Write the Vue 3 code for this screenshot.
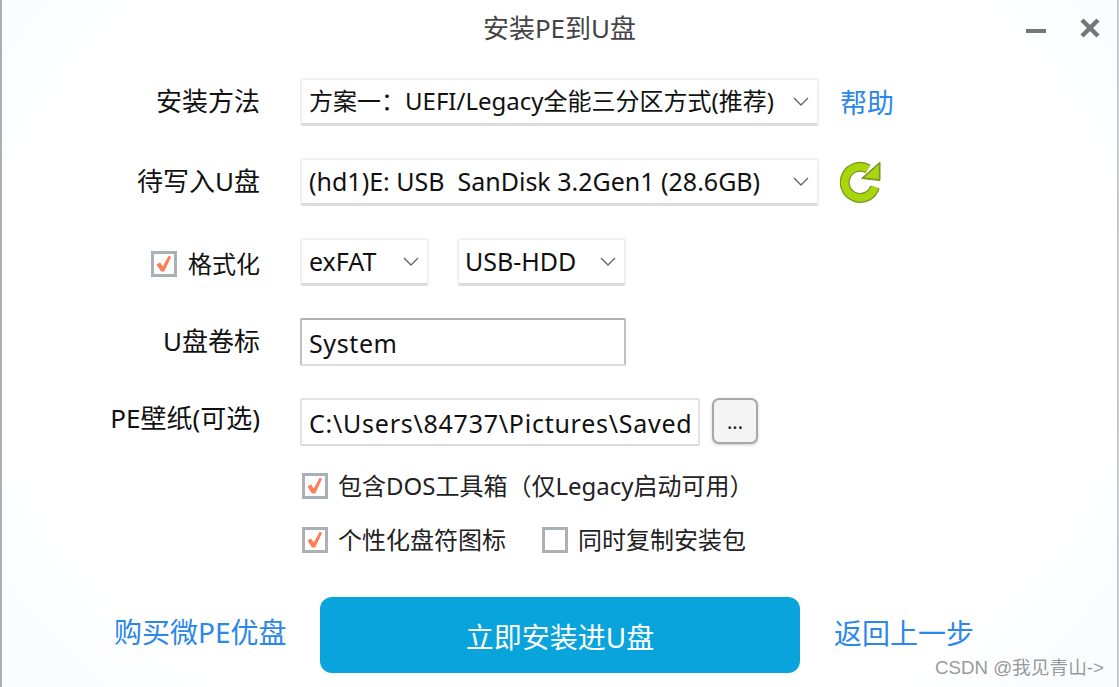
<script setup>
import {ref} from "vue";

const formatDisk = ref(true);
const dosTools = ref(true);
const driveIcon = ref(true);
const copyPackage = ref(false);
</script>

<template>
  <div class="window">
    <div class="title-bar">
      <span class="title">安装PE到U盘</span>
      <div class="win-buttons">
        <svg width="20" height="5" viewBox="0 0 20 5"><rect width="20" height="4" fill="#777"/></svg>
        <svg width="22" height="22" viewBox="0 0 22 22"><path d="M3 3L19 19M19 3L3 19" stroke="#777" stroke-width="4.5" fill="none"/></svg>
      </div>
    </div>

    <div class="form">
      <label class="label">安装方法</label>
      <div class="controls">
        <div class="select wide method">
          <span>方案一：UEFI/Legacy全能三分区方式(推荐)</span>
          <svg class="chevron" width="16" height="9" viewBox="0 0 16 9"><path d="M1 1L8 8L15 1" stroke="#666" stroke-width="1.4" fill="none"/></svg>
        </div>
        <a class="link help">帮助</a>
      </div>

      <label class="label">待写入U盘</label>
      <div class="controls">
        <div class="select wide">
          <span>(hd1)E: USB&nbsp; SanDisk 3.2Gen1 (28.6GB)</span>
          <svg class="chevron" width="16" height="9" viewBox="0 0 16 9"><path d="M1 1L8 8L15 1" stroke="#666" stroke-width="1.4" fill="none"/></svg>
        </div>
        <svg class="refresh" width="42" height="44" viewBox="0 0 42 44">
          <path d="M35 27A15.5 15.5 0 1 1 28 9" fill="none" stroke="#7c9426" stroke-width="10"/>
          <path d="M40 2V20.5L21.5 18.5Z" fill="#7c9426" stroke="#7c9426" stroke-width="1"/>
          <path d="M35 27A15.5 15.5 0 1 1 28 9" fill="none" stroke="#a8d60c" stroke-width="7.5"/>
          <path d="M38.8 4.5V19.2L24.5 17.6Z" fill="#a8d60c"/>
        </svg>
      </div>

      <div class="label check-label">
        <span class="checkbox" :class="{checked: formatDisk}" @click="formatDisk = !formatDisk">
          <svg v-if="formatDisk" width="20" height="20" viewBox="0 0 20 20"><path d="M2.5 10.5L6 8.5L8.8 12.5L14.8 1.5L17 3L10.2 17.5H7Z" fill="#ff7d55"/></svg>
        </span>
        <span>格式化</span>
      </div>
      <div class="controls pair">
        <div class="select fs">
          <span>exFAT</span>
          <svg class="chevron" width="16" height="9" viewBox="0 0 16 9"><path d="M1 1L8 8L15 1" stroke="#666" stroke-width="1.4" fill="none"/></svg>
        </div>
        <div class="select mode">
          <span>USB-HDD</span>
          <svg class="chevron" width="16" height="9" viewBox="0 0 16 9"><path d="M1 1L8 8L15 1" stroke="#666" stroke-width="1.4" fill="none"/></svg>
        </div>
      </div>

      <label class="label">U盘卷标</label>
      <div class="controls">
        <div class="input volume">System</div>
      </div>

      <label class="label wallpaper">PE壁纸(可选)</label>
      <div class="controls browse">
        <div class="input path">C:\Users\84737\Pictures\Saved</div>
        <button class="dots">...</button>
      </div>
    </div>

    <div class="options">
      <div class="option-row">
        <div class="option">
          <span class="checkbox" :class="{checked: dosTools}" @click="dosTools = !dosTools">
            <svg v-if="dosTools" width="20" height="20" viewBox="0 0 20 20"><path d="M2.5 10.5L6 8.5L8.8 12.5L14.8 1.5L17 3L10.2 17.5H7Z" fill="#ff7d55"/></svg>
          </span>
          <span>包含DOS工具箱（仅Legacy启动可用）</span>
        </div>
      </div>
      <div class="option-row">
        <div class="option">
          <span class="checkbox" :class="{checked: driveIcon}" @click="driveIcon = !driveIcon">
            <svg v-if="driveIcon" width="20" height="20" viewBox="0 0 20 20"><path d="M2.5 10.5L6 8.5L8.8 12.5L14.8 1.5L17 3L10.2 17.5H7Z" fill="#ff7d55"/></svg>
          </span>
          <span>个性化盘符图标</span>
        </div>
        <div class="option">
          <span class="checkbox" :class="{checked: copyPackage}" @click="copyPackage = !copyPackage">
            <svg v-if="copyPackage" width="20" height="20" viewBox="0 0 20 20"><path d="M2.5 10.5L6 8.5L8.8 12.5L14.8 1.5L17 3L10.2 17.5H7Z" fill="#ff7d55"/></svg>
          </span>
          <span>同时复制安装包</span>
        </div>
      </div>
    </div>

    <div class="footer">
      <a class="link buy">购买微PE优盘</a>
      <button class="install">立即安装进U盘</button>
      <a class="link back">返回上一步</a>
    </div>

    <span class="watermark">CSDN @我见青山-&gt;</span>
  </div>
</template>

<style>
html, body {
  margin: 0;
  background: #fff;
}
</style>

<style scoped>
.window {
  position: relative;
  box-sizing: border-box;
  width: 1119px;
  height: 687px;
  overflow: hidden;
  border-left: 2px solid #a9afb5;
  border-right: 2px solid #c4c9ce;
  background: radial-gradient(ellipse 640px 520px at 50% 46%, #ffffff 88%, #fafdff 100%);
  font-family: "Noto Sans", "Noto Sans CJK SC", sans-serif;
  font-size: 25px;
  color: #111;
  line-height: 1;
}

.title-bar {
  display: grid;
  grid-template-columns: 1fr auto 1fr;
  align-items: center;
  height: 78px;
  padding-bottom: 22px;
  box-sizing: border-box;
}

.title {
  grid-column: 2;
  color: #444;
  font-size: 26px;
}

.win-buttons {
  grid-column: 3;
  display: flex;
  justify-content: flex-end;
  align-items: center;
  gap: 33px;
  padding-right: 16px;
}

.win-buttons svg:first-child {
  margin-top: 7px;
}

.form {
  display: grid;
  grid-template-columns: 258px 1fr;
  grid-auto-rows: 48px;
  column-gap: 40px;
  row-gap: 32px;
}

.label {
  display: flex;
  justify-content: flex-end;
  align-items: center;
  margin-bottom: 2px;
  font-size: 26px;
}

.wallpaper {
  margin-bottom: 8px;
}

.check-label {
  gap: 11px;
  margin-bottom: 0;
  padding-top: 3px;
  font-size: 24px;
}

.controls {
  display: flex;
  align-items: center;
}

.pair {
  gap: 28px;
}

.browse {
  gap: 12px;
}

.select {
  box-sizing: border-box;
  display: flex;
  align-items: center;
  justify-content: space-between;
  height: 48px;
  padding: 0 8px 1px 7px;
  background: #fff;
  border: 2px solid #f0f0f0;
  border-bottom: 3px solid #dcdcdc;
  border-radius: 3px;
  white-space: nowrap;
}

.method {
  font-size: 24px;
}

.wide {
  width: 519px;
}

.fs {
  width: 129px;
}

.mode {
  width: 169px;
  padding-left: 6px;
}

.chevron {
  flex: none;
}

.help {
  margin-left: 21px;
  font-size: 27px;
}

.refresh {
  margin-left: 21px;
}

.input {
  box-sizing: border-box;
  display: flex;
  align-items: center;
  height: 48px;
  padding: 2px 7px 0 7px;
  background: #fff;
  white-space: nowrap;
  overflow: hidden;
  border-radius: 2px;
}

.volume {
  width: 326px;
  letter-spacing: 0.6px;
  border: 2px solid #dcdcdc;
  border-top-color: #b0b0b0;
  border-left-color: #c0c0c0;
  border-right-color: #c0c0c0;
}

.path {
  width: 400px;
  letter-spacing: 0.75px;
  border: 2px solid #e4e4e4;
  border-bottom-color: #d9d9d9;
}

.dots {
  box-sizing: border-box;
  width: 46px;
  height: 46px;
  margin-bottom: 2px;
  padding: 0;
  background: #f4f4f4;
  border: 2px solid #a8a8a8;
  border-radius: 7px;
  box-shadow: 0 1px 3px rgba(0, 0, 0, 0.2);
  font-family: inherit;
  font-size: 20px;
  color: #222;
}

.options {
  display: flex;
  flex-direction: column;
  gap: 14px;
  margin-top: 20px;
  padding-left: 300px;
}

.option-row {
  display: flex;
  gap: 36px;
  height: 40px;
}

.option {
  display: flex;
  align-items: center;
  gap: 10px;
  font-size: 24px;
  color: #222;
}

.checkbox {
  box-sizing: border-box;
  display: flex;
  align-items: center;
  justify-content: center;
  flex: none;
  width: 26px;
  height: 26px;
  background: #fff;
  border: 3px solid #a9b0b8;
}

.footer {
  display: flex;
  align-items: center;
  margin-top: 37px;
  padding-left: 112px;
}

.link {
  color: #2b87ea;
  white-space: nowrap;
}

.buy {
  width: 206px;
  margin-bottom: 6px;
  font-size: 28px;
}

.install {
  width: 480px;
  height: 76px;
  border: none;
  border-radius: 12px;
  background: #0aa4dc;
  color: #fff;
  font-family: inherit;
  font-size: 28px;
  padding-top: 3px;
}

.back {
  margin-left: 34px;
  margin-bottom: 5px;
  font-size: 28px;
}

.watermark {
  position: absolute;
  right: 13px;
  bottom: 9px;
  font-family: "Liberation Sans", "Noto Sans CJK SC", sans-serif;
  font-size: 18.7px;
  color: #9a9a9a;
}
</style>
